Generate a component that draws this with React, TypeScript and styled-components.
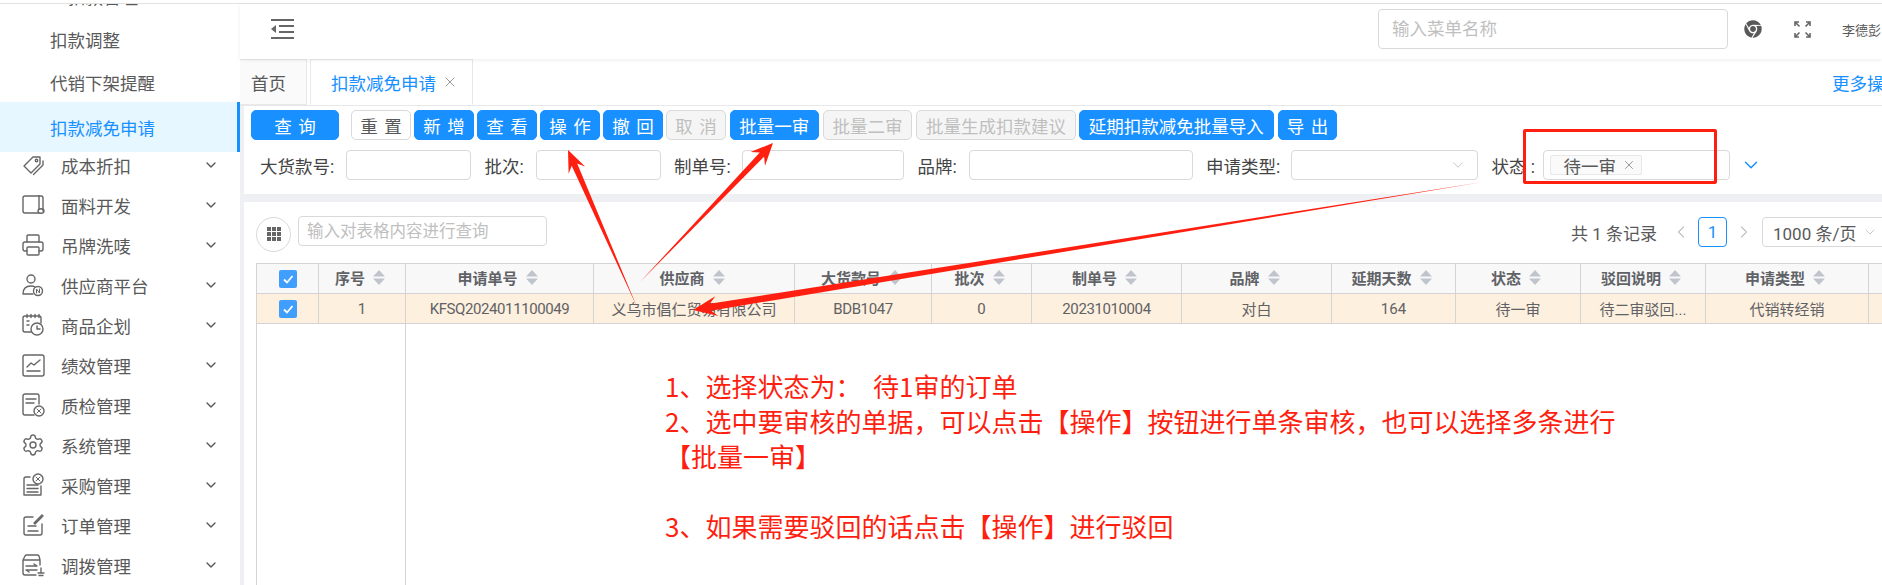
import React from "react"
import styled, { createGlobalStyle } from "styled-components"
import { ChevronDown, ChevronLeft, ChevronRight, Printer, Settings, X } from "lucide-react"
import { FaChrome } from "react-icons/fa"

const GlobalStyle = createGlobalStyle`
    html, body {
        margin: 0;
        padding: 0;
        background: #fff;
        overflow: hidden;
    }
    * {
        box-sizing: border-box;
    }
    body {
        font-family: Roboto, "Noto Sans CJK SC", sans-serif;
    }
`

const Page = styled.div`
    position: relative;
    width: 1882px;
    height: 585px;
    overflow: hidden;
    background: #fff;
    padding-top: 3px;
`

const TopLine = styled.div`
    height: 1px;
    background: #e2e2e2;
`

const Body = styled.div`
    display: flex;
    height: 581px;
`

const Sidebar = styled.aside`
    width: 240px;
    flex: none;
    overflow: hidden;
    background: #fff;
`

const SubList = styled.div`
    margin-top: -29px;
`

const SubItem = styled.div<{ $active?: boolean; $indent?: number }>`
    position: relative;
    display: flex;
    align-items: center;
    height: ${(p) => (p.$active ? "50px" : "43px")};
    margin-top: ${(p) => (p.$active ? "-2px" : "0")};
    padding-left: ${(p) => p.$indent || 50}px;
    font-size: 17.5px;
    color: ${(p) => (p.$active ? "#1890ff" : "#595959")};
    background: ${(p) => (p.$active ? "#e6f7ff" : "transparent")};
    border-right: ${(p) => (p.$active ? "3px solid #1890ff" : "none")};
`

const MenuList = styled.div`
    margin-top: -7px;
`

const MenuItem = styled.div`
    position: relative;
    display: flex;
    align-items: center;
    height: 40px;
    padding: 0 21px;
    font-size: 17.5px;
    color: #595959;
    svg.chev {
        margin-left: auto;
        color: #555;
    }
`

const MenuIcon = styled.svg`
    width: 24px;
    height: 24px;
    flex: none;
    margin-right: 16px;
    fill: none;
    stroke: #666;
    stroke-width: 1.4;
    stroke-linejoin: round;
    stroke-linecap: round;
`

const Main = styled.div`
    flex: 1;
    min-width: 0;
    display: flex;
    flex-direction: column;
`

const Header = styled.header`
    position: relative;
    z-index: 2;
    display: flex;
    align-items: center;
    height: 55px;
    padding: 0 0 5px 31px;
    background: #fff;
    box-shadow: 0 1px 4px rgba(0, 21, 41, 0.08);
`

const SearchMenu = styled.input`
    width: 350px;
    height: 40px;
    margin-left: auto;
    padding: 0 13px;
    border: 1px solid #d9d9d9;
    border-radius: 4px;
    font: inherit;
    font-size: 17.5px;
    outline: none;
    &::placeholder {
        color: #bfbfbf;
    }
`

const HeaderTools = styled.div`
    display: flex;
    align-items: center;
    width: 154px;
    padding-left: 16px;
    color: #595959;
    overflow: hidden;
`

const UserName = styled.span`
    margin-left: 31px;
    font-size: 13px;
    white-space: nowrap;
`

const TabBar = styled.nav`
    display: flex;
    align-items: stretch;
    height: 47px;
    background: #fff;
    border-bottom: 1px solid #e8e8e8;
    overflow: hidden;
`

const Tab = styled.div<{ $active?: boolean }>`
    display: flex;
    align-items: center;
    gap: 6px;
    font-size: 17.5px;
    margin-right: 3px;
    padding: ${(p) => (p.$active ? "0 8px 0 20px" : "0 0 0 11px")};
    width: ${(p) => (p.$active ? "163px" : "67px")};
    color: ${(p) => (p.$active ? "#1890ff" : "#595959")};
    background: ${(p) => (p.$active ? "#fff" : "#fafafa")};
    border: 1px solid #e8e8e8;
    border-left-width: ${(p) => (p.$active ? "1px" : "0")};
    border-bottom-color: ${(p) => (p.$active ? "#fff" : "#e8e8e8")};
    svg {
        color: #999;
    }
`

const MoreOps = styled.a`
    margin-left: auto;
    width: 50px;
    display: flex;
    align-items: center;
    font-size: 17.5px;
    color: #1890ff;
    white-space: nowrap;
`

const Content = styled.div`
    flex: 1;
    min-height: 0;
    display: flex;
    flex-direction: column;
    padding-left: 4px;
    background: #eff0f3;
`

const QueryPanel = styled.section`
    height: 88px;
    padding: 4px 0 0 7px;
    background: #fff;
`

const ButtonRow = styled.div`
    display: flex;
    gap: 3px;
`

const Btn = styled.button<{ $kind?: "primary" | "plain" | "disabled"; $width: number; $after?: number }>`
    width: ${(p) => p.$width}px;
    height: 30px;
    margin-right: ${(p) => p.$after || 0}px;
    padding: 0;
    font: inherit;
    font-size: 17.5px;
    white-space: pre;
    word-spacing: 2px;
    border-radius: 5px;
    border: 1px solid
        ${(p) => (p.$kind === "plain" || p.$kind === "disabled" ? "#d9d9d9" : "#1890ff")};
    background: ${(p) => (p.$kind === "plain" ? "#fff" : p.$kind === "disabled" ? "#f5f5f5" : "#1890ff")};
    color: ${(p) => (p.$kind === "plain" ? "#595959" : p.$kind === "disabled" ? "#bfbfbf" : "#fff")};
`

const FilterRow = styled.div`
    display: flex;
    align-items: center;
    gap: 13.5px;
    margin-top: 10px;
    padding-left: 9px;
`

const Field = styled.label`
    display: flex;
    align-items: center;
    gap: 10px;
`

const FieldLabel = styled.span<{ $width: number }>`
    width: ${(p) => p.$width}px;
    font-size: 17.5px;
    color: #444;
    white-space: nowrap;
`

const FieldBox = styled.div<{ $width: number }>`
    position: relative;
    display: flex;
    align-items: center;
    width: ${(p) => p.$width}px;
    height: 30px;
    padding-left: 6px;
    border: 1px solid #d9d9d9;
    border-radius: 4px;
    background: #fff;
    > svg {
        position: absolute;
        right: 10px;
        color: #bfbfbf;
    }
`

const StatusTag = styled.span`
    display: flex;
    align-items: center;
    gap: 6px;
    width: 92px;
    height: 20px;
    padding-left: 13px;
    font-size: 17.5px;
    color: #595959;
    background: #fafafa;
    border: 1px solid #e8e8e8;
    border-radius: 2px;
    svg {
        color: #8c8c8c;
    }
`

const Expand = styled.span`
    display: flex;
    margin-left: -3px;
    color: #1890ff;
`

const TablePanel = styled.section`
    flex: 1;
    min-height: 0;
    margin-top: 8px;
    padding: 15px 0 0 12px;
    background: #fff;
    overflow: hidden;
`

const TableTools = styled.div`
    display: flex;
    align-items: flex-start;
    height: 35px;
    margin-bottom: 11px;
`

const RoundBtn = styled.div`
    display: flex;
    align-items: center;
    justify-content: center;
    width: 35px;
    height: 35px;
    flex: none;
    border: 1px solid #d9d9d9;
    border-radius: 50%;
`

const TableSearch = styled.input`
    width: 249px;
    height: 30px;
    flex: none;
    margin: -1px 0 0 7px;
    padding: 0 8px;
    border: 1px solid #d9d9d9;
    border-radius: 4px;
    font: inherit;
    font-size: 16.5px;
    outline: none;
    &::placeholder {
        color: #bfbfbf;
    }
`

const Pager = styled.div`
    display: flex;
    align-items: center;
    height: 30px;
    margin-left: 1024px;
    flex: none;
    font-size: 17px;
    color: #595959;
    white-space: nowrap;
    > svg {
        color: #bfbfbf;
    }
`

const PageNum = styled.span`
    display: flex;
    align-items: center;
    justify-content: center;
    width: 29px;
    height: 30px;
    margin: 0 7px;
    border: 1px solid #1890ff;
    border-radius: 4px;
    color: #1890ff;
`

const PageSize = styled.div`
    display: flex;
    align-items: center;
    gap: 6px;
    width: 125px;
    height: 30px;
    margin-left: 8px;
    padding-left: 10px;
    border: 1px solid #d9d9d9;
    border-radius: 4px;
    svg {
        color: #bfbfbf;
    }
`

const Table = styled.table`
    width: 1686px;
    table-layout: fixed;
    border-collapse: collapse;
    font-size: 15px;
    color: #606266;
    th, td {
        height: 30px;
        padding: 0;
        text-align: center;
        border: 1px solid #d4d4d4;
        white-space: nowrap;
        overflow: hidden;
    }
    th {
        background: #f8f8f9;
        font-weight: 700;
    }
    tbody tr.selected td {
        background: #fef0de;
    }
    td.code {
        letter-spacing: -0.4px;
    }
    td.filler {
        height: 264px;
        border-bottom: none;
    }
    td.empty {
        border: none;
    }
`

const HeadCell = styled.span`
    display: inline-flex;
    align-items: center;
    gap: 8px;
    margin: -3px 4px 0 0;
`

const SortMark = styled.svg`
    width: 12px;
    height: 15px;
    fill: #c0c4cc;
`

const Check = styled.span`
    display: inline-flex;
    align-items: center;
    justify-content: center;
    width: 18px;
    height: 18px;
    vertical-align: middle;
    border-radius: 2px;
    background: #409eff;
`

const RedBox = styled.div`
    position: absolute;
    left: 1523px;
    top: 129px;
    width: 194px;
    height: 55px;
    border: 3px solid #ff1f10;
    border-radius: 2px;
`

const Arrows = styled.svg`
    position: absolute;
    left: 0;
    top: 0;
    pointer-events: none;
`

const Note = styled.div`
    position: absolute;
    left: 665px;
    top: 368px;
    width: 970px;
    font-family: "Noto Sans CJK SC", sans-serif;
    font-size: 26px;
    line-height: 35px;
    color: #ff1f10;
    white-space: pre;
`

const subItems = ["扣款调整", "代销下架提醒"]

const menuIcons: Record<string, React.ReactNode> = {
    tag: (
        <>
            <path d="M3 13 12 4h7v7l-9 9z" />
            <circle cx="15.5" cy="7.5" r="1.2" />
            <path d="M22 8v4l-9.5 9.5" />
        </>
    ),
    roll: (
        <>
            <path d="M18 20H4a2 2 0 0 1-2-2V5a2 2 0 0 1 2-2h14" />
            <path d="M18 3h2a2 2 0 0 1 2 2v13" />
            <path d="M18 3v13" />
            <ellipse cx="20" cy="18" rx="3" ry="2.2" />
        </>
    ),
    supplier: (
        <>
            <circle cx="10" cy="6" r="4" />
            <path d="M2 21c0-5 3-8 8-8 1.5 0 3 .3 4 1M2 21h10" />
            <circle cx="17" cy="18" r="4.5" />
            <path d="M15.5 20v-4l3 4v-4" strokeWidth="1" />
        </>
    ),
    plan: (
        <>
            <path d="M10 19H4a2 2 0 0 1-2-2V5a2 2 0 0 1 2-2h14a2 2 0 0 1 2 2v5" />
            <path d="M6 1.5v3M10 1.5v3M14 1.5v3M18 1.5v3M6 8h2M6 12h2" />
            <circle cx="16" cy="16" r="6" />
            <path d="M16 13v3h3" />
        </>
    ),
    chart: (
        <>
            <rect x="2" y="2" width="21" height="21" rx="2" />
            <path d="M6 18h13M6 14l4-4 3 2 6-5" />
        </>
    ),
    quality: (
        <>
            <path d="M13 22H4a2 2 0 0 1-2-2V3a2 2 0 0 1 2-2h12a2 2 0 0 1 2 2v8" />
            <path d="M5 6h10M5 10h8" />
            <circle cx="18" cy="18" r="5" />
            <path d="M16 16l4 4M20 16l-4 4" strokeWidth="1" />
        </>
    ),
    buy: (
        <>
            <path d="M9 4H5a2 2 0 0 0-2 2v16h17v-9" />
            <path d="M6 12h11M6 15.5h11M6 19h11" />
            <circle cx="17" cy="6" r="5" />
            <path d="M15 4l4 4M19 4l-4 4" strokeWidth="1" />
        </>
    ),
    order: (
        <>
            <path d="M12 4H5a2 2 0 0 0-2 2v14a2 2 0 0 0 2 2h14a2 2 0 0 0 2-2V11" />
            <path d="M7 13h8M7 18h10" />
            <path d="M13 10l8-8 1 1-8 8z" />
        </>
    ),
    transfer: (
        <>
            <path d="M15 22H4a2 2 0 0 1-2-2V7l2-4a2 2 0 0 1 2-1h10a2 2 0 0 1 2 1l1 4v5M2 7h17" />
            <path d="M5 13h11l-3-2M16 17H5l3 2" />
            <path d="M20 15v4M17 20h6M18 22.5h4" />
        </>
    ),
}

const menus = [
    { label: "成本折扣", icon: "tag" },
    { label: "面料开发", icon: "roll" },
    { label: "吊牌洗唛", icon: "printer" },
    { label: "供应商平台", icon: "supplier" },
    { label: "商品企划", icon: "plan" },
    { label: "绩效管理", icon: "chart" },
    { label: "质检管理", icon: "quality" },
    { label: "系统管理", icon: "gear" },
    { label: "采购管理", icon: "buy" },
    { label: "订单管理", icon: "order" },
    { label: "调拨管理", icon: "transfer" },
]

const buttons: { text: string; width: number; kind?: "primary" | "plain" | "disabled"; after?: number }[] = [
    { text: "查 询", width: 88, after: 9 },
    { text: "重 置", width: 60, kind: "plain" },
    { text: "新 增", width: 60 },
    { text: "查 看", width: 60 },
    { text: "操 作", width: 60 },
    { text: "撤 回", width: 60 },
    { text: "取 消", width: 60, kind: "disabled", after: 1 },
    { text: "批量一审", width: 88.5, after: 1.5 },
    { text: "批量二审", width: 89, kind: "disabled", after: 1 },
    { text: "批量生成扣款建议", width: 160, kind: "disabled" },
    { text: "延期扣款减免批量导入", width: 194.5, after: 1.5 },
    { text: "导 出", width: 59 },
]

const filters = [
    { label: "大货款号:", labelWidth: 76, width: 125 },
    { label: "批次:", labelWidth: 41, width: 125 },
    { label: "制单号:", labelWidth: 58, width: 162 },
    { label: "品牌:", labelWidth: 41, width: 224 },
]

const columns = [
    { title: "序号", width: 87, value: "1" },
    { title: "申请单号", width: 188, value: "KFSQ2024011100049", code: true },
    { title: "供应商", width: 201, value: "义乌市倡仁贸易有限公司" },
    { title: "大货款号", width: 137, value: "BDB1047", code: true },
    { title: "批次", width: 100, value: "0" },
    { title: "制单号", width: 150, value: "20231010004", code: true },
    { title: "品牌", width: 150, value: "对白" },
    { title: "延期天数", width: 124, value: "164" },
    { title: "状态", width: 125, value: "待一审" },
    { title: "驳回说明", width: 125, value: "待二审驳回..." },
    { title: "申请类型", width: 163, value: "代销转经销" },
    { title: "", width: 74, value: "" },
]

const noteLines = [
    "1、选择状态为\uFF1A  待1审的订单",
    "2、选中要审核的单据\uFF0C可以点击【操作】按钮进行单条审核\uFF0C也可以选择多条进行",
    "【批量一审】",
    " ",
    "3、如果需要驳回的话点击【操作】进行驳回",
]

// tapered screenshot-tool arrow, thin at the tail and wide at the head
const arrowPoints = (tx: number, ty: number, px: number, py: number, neck: number, wing: number, head: number) => {
    const len = Math.hypot(px - tx, py - ty)
    const dx = (px - tx) / len
    const dy = (py - ty) / len
    const nx = -dy
    const ny = dx
    const at = (back: number, side: number) => `${px - dx * back + nx * side},${py - dy * back + ny * side}`
    return [
        `${tx},${ty}`,
        at(head * 0.8, neck / 2),
        at(head * 1.1, wing),
        `${px},${py}`,
        at(head * 1.1, -wing),
        at(head * 0.8, -neck / 2),
    ].join(" ")
}

const CheckBox = () => (
    <Check>
        <svg width="12" height="12" viewBox="0 0 12 12" fill="none" stroke="#fff" strokeWidth="1.8">
            <path d="M2 6.5 5 9.5 10.5 3" />
        </svg>
    </Check>
)

const MenuGlyph = ({ name }: { name: string }) => {
    if (name === "printer") return <Printer size={24} color="#666" strokeWidth={1.4} style={{ marginRight: 16, flex: "none" }} />
    if (name === "gear") return <Settings size={24} color="#666" strokeWidth={1.4} style={{ marginRight: 16, flex: "none" }} />
    return <MenuIcon viewBox="0 0 24 24">{menuIcons[name]}</MenuIcon>
}

export default function App() {
    return (
        <Page>
            <GlobalStyle />
            <TopLine />
            <Body>
                <Sidebar>
                    <SubList>
                        <SubItem $indent={68}>扣款管理</SubItem>
                        {subItems.map((item) => (
                            <SubItem key={item}>{item}</SubItem>
                        ))}
                        <SubItem $active>扣款减免申请</SubItem>
                    </SubList>
                    <MenuList>
                        {menus.map((menu) => (
                            <MenuItem key={menu.label}>
                                <MenuGlyph name={menu.icon} />
                                {menu.label}
                                <ChevronDown className="chev" size={16} strokeWidth={2} />
                            </MenuItem>
                        ))}
                    </MenuList>
                </Sidebar>
                <Main>
                    <Header>
                        <svg width="24" height="20" viewBox="0 0 24 20" fill="#666">
                            <rect x="0" y="0" width="23" height="2" />
                            <rect x="8" y="6" width="15" height="2" />
                            <rect x="8" y="12" width="15" height="2" />
                            <rect x="0" y="18" width="23" height="2" />
                            <path d="M5 6v8L0 10z" />
                        </svg>
                        <SearchMenu placeholder="输入菜单名称" readOnly />
                        <HeaderTools>
                            <FaChrome size={18} />
                            <svg width="17" height="17" viewBox="0 0 17 17" fill="none" stroke="#666" strokeWidth="1.6" style={{ marginLeft: 32 }}>
                                <path d="M1 5V1h4M1 1l4.5 4.5M16 5V1h-4M16 1l-4.5 4.5M1 12v4h4M1 16l4.5-4.5M16 12v4h-4M16 16l-4.5-4.5" />
                            </svg>
                            <UserName>李德彭</UserName>
                        </HeaderTools>
                    </Header>
                    <TabBar>
                        <Tab>首页</Tab>
                        <Tab $active>
                            扣款减免申请
                            <X size={16} strokeWidth={1.5} />
                        </Tab>
                        <MoreOps>更多操作</MoreOps>
                    </TabBar>
                    <Content>
                        <QueryPanel>
                            <ButtonRow>
                                {buttons.map((b) => (
                                    <Btn key={b.text} $kind={b.kind} $width={b.width} $after={b.after}>
                                        {b.text}
                                    </Btn>
                                ))}
                            </ButtonRow>
                            <FilterRow>
                                {filters.map((f) => (
                                    <Field key={f.label}>
                                        <FieldLabel $width={f.labelWidth}>{f.label}</FieldLabel>
                                        <FieldBox $width={f.width} />
                                    </Field>
                                ))}
                                <Field>
                                    <FieldLabel $width={75}>申请类型:</FieldLabel>
                                    <FieldBox $width={187}>
                                        <ChevronDown size={18} strokeWidth={1.2} />
                                    </FieldBox>
                                </Field>
                                <Field>
                                    <FieldLabel $width={41}>状态 :</FieldLabel>
                                    <FieldBox $width={187}>
                                        <StatusTag>
                                            待一审
                                            <X size={14} strokeWidth={1.5} />
                                        </StatusTag>
                                    </FieldBox>
                                </Field>
                                <Expand>
                                    <ChevronDown size={22} strokeWidth={1.6} />
                                </Expand>
                            </FilterRow>
                        </QueryPanel>
                        <TablePanel>
                            <TableTools>
                                <RoundBtn>
                                    <svg width="14" height="15" viewBox="0 0 14 15" fill="#666">
                                        {[0, 5, 10].map((x) =>
                                            [0, 5, 10].map((y) => <rect key={`${x}-${y}`} x={x} y={y} width="4" height="4" />),
                                        )}
                                    </svg>
                                </RoundBtn>
                                <TableSearch placeholder="输入对表格内容进行查询" readOnly />
                                <Pager>
                                    共 1 条记录
                                    <ChevronLeft size={20} strokeWidth={1.3} style={{ marginLeft: 14 }} />
                                    <PageNum>1</PageNum>
                                    <ChevronRight size={20} strokeWidth={1.3} />
                                    <PageSize>
                                        1000 条/页
                                        <ChevronDown size={16} strokeWidth={1.3} />
                                    </PageSize>
                                </Pager>
                            </TableTools>
                            <Table>
                                <colgroup>
                                    <col width={62} />
                                    {columns.map((c) => (
                                        <col key={c.title} width={c.width} />
                                    ))}
                                </colgroup>
                                <thead>
                                    <tr>
                                        <th>
                                            <CheckBox />
                                        </th>
                                        {columns.map((c) => (
                                            <th key={c.title}>
                                                {c.title && (
                                                    <HeadCell>
                                                        {c.title}
                                                        <SortMark viewBox="0 0 12 15">
                                                            <path d="M6 0l6 6.5H0zM6 15 0 8.5h12z" />
                                                        </SortMark>
                                                    </HeadCell>
                                                )}
                                            </th>
                                        ))}
                                    </tr>
                                </thead>
                                <tbody>
                                    <tr className="selected">
                                        <td>
                                            <CheckBox />
                                        </td>
                                        {columns.map((c) => (
                                            <td key={c.title} className={c.code ? "code" : undefined}>
                                                {c.value}
                                            </td>
                                        ))}
                                    </tr>
                                    <tr>
                                        <td className="filler" colSpan={2} />
                                        <td className="empty" colSpan={columns.length - 1} />
                                    </tr>
                                </tbody>
                            </Table>
                        </TablePanel>
                    </Content>
                </Main>
            </Body>
            <RedBox />
            <Arrows width="1882" height="585" viewBox="0 0 1882 585" fill="#ff1f10">
                <polygon points={arrowPoints(637, 307, 568, 150, 6, 9, 20)} />
                <polygon points={arrowPoints(640, 282, 773, 143, 6, 10, 20)} />
                <polygon points={arrowPoints(1483, 182, 693, 310, 7, 10, 22)} />
            </Arrows>
            <Note>
                {noteLines.map((line, i) => (
                    <div key={i}>{line}</div>
                ))}
            </Note>
        </Page>
    )
}
